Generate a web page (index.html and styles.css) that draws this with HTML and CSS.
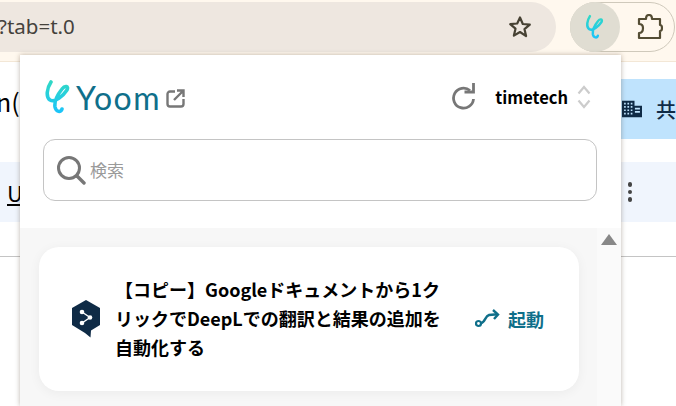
FILE: index.html
```html
<!DOCTYPE html>
<html lang="ja">
<head>
  <meta charset="UTF-8" />
  <meta name="viewport" content="width=device-width, initial-scale=1.0" />
  <title>Yoom</title>
  <link rel="stylesheet" href="styles.css">
</head>
<body>
  <header class="toolbar">
    <div class="urlbar">
      <span class="url-text">?tab=t.0</span>
      <svg class="star" width="24" height="24" viewBox="0 0 24 24"><path d="M12 2.500l2.800 6.500 7 .6-5.300 4.600 1.600 6.900L12 17l-6.100 3.600 1.600-6.900-5.300-4.600 7-.6z" fill="none" stroke="#474234" stroke-width="2.200" stroke-linejoin="round"/></svg>
    </div>
    <div class="ext-pill">
      <div class="ext-active">
        <svg width="20" height="26" viewBox="0 0 26 36"><defs><linearGradient id="yoom-grad" x1="0" y1="0" x2="0" y2="1"><stop offset="0" stop-color="#30d8c6"/><stop offset="1" stop-color="#1cc4f8"/></linearGradient></defs><path d="M6 3C2 9 .5 18 5 21c5 3 13-4 17-10 2-4-2-5-5-1-4 5-8 11-7 18 1 5 6 6 7 2" fill="none" stroke="url(#yoom-grad)" stroke-width="3.400" stroke-linecap="round"/></svg>
      </div>
      <svg class="puzzle" width="26" height="26" viewBox="0 0 26 26"><path d="M2 5h7c0-3 1-4 3-4s3 1 3 4h8v6c1.500 0 2 1.500 2 3s-.5 3-2 3v7H2v-5c3 0 4-2 4-5s-1-4-4-4z" fill="none" stroke="#544d34" stroke-width="2.200" stroke-linejoin="round"/></svg>
    </div>
  </header>

  <main class="page">
    <div class="title-row">
      <span class="doc-title">n(</span>
      <div class="share-btn">
        <svg width="24" height="22" viewBox="0 0 24 22"><path d="M0 1h15v6h9v14H0z" fill="#0f2b46"/><path d="M2.500 3.500h2v2h-2zm4 0h2v2h-2zm4 0h2v2h-2zm-8 4h2v2h-2zm4 0h2v2h-2zm4 0h2v2h-2zm-8 4h2v2h-2zm4 0h2v2h-2zm4 0h2v2h-2zm-8 4h2v2h-2zm4 0h2v2h-2zm4 0h2v2h-2zM15.500 9.500h6v2h-6zm0 4h6v2h-6z" fill="#bfe3fd"/></svg>
        <span class="share-label">共</span>
      </div>
    </div>
    <div class="table-head">
      <span class="head-u">U</span>
      <span class="kebab"><i></i><i></i><i></i></span>
    </div>
    <div class="table-row"></div>
  </main>

  <section class="popup">
    <div class="popup-head">
      <div class="brand">
        <svg width="26" height="36" viewBox="0 0 26 36"><path d="M6 3C2 9 .5 18 5 21c5 3 13-4 17-10 2-4-2-5-5-1-4 5-8 11-7 18 1 5 6 6 7 2" fill="none" stroke="url(#yoom-grad)" stroke-width="3.600" stroke-linecap="round"/></svg>
        <span class="brand-name">Yoom</span>
        <svg class="ext-link" width="19" height="19" viewBox="0 0 19 19"><path d="M9 2.500H4A2.500 2.500 0 0 0 1.500 5v10A2.500 2.500 0 0 0 4 17.500h11a2.500 2.500 0 0 0 2.500-2.500v-5M8 11l8.500-8.500M11 1.500h6.500V8" fill="none" stroke="#777" stroke-width="2.400"/></svg>
      </div>
      <div class="account">
        <svg width="25" height="28" viewBox="0 0 25 28"><path d="M19 7.500A10 10 0 1 0 22.500 16" fill="none" stroke="#777" stroke-width="2.800"/><path d="M13.500 9h9V0" fill="none" stroke="#777" stroke-width="2.800"/></svg>
        <span class="account-name">timetech</span>
        <svg width="14" height="26" viewBox="0 0 14 26"><path d="M1.500 9.500L7 3l5.500 6.500M1.500 16.500L7 23l5.500-6.500" fill="none" stroke="#ccc" stroke-width="2.200"/></svg>
      </div>
    </div>
    <div class="search">
      <svg width="30" height="30" viewBox="0 0 30 30"><circle cx="13" cy="13" r="10.500" fill="none" stroke="#777" stroke-width="3"/><path d="M21 21l7 7" stroke="#777" stroke-width="3.400" stroke-linecap="round"/></svg>
      <span class="search-text">検索</span>
    </div>
    <div class="flow-list">
      <div class="flow-cards">
        <article class="flow-card">
          <svg class="deepl" width="30" height="38" viewBox="0 0 30 38"><path d="M15 0l14 8v17l-9 5.500-.5 7-5.500-4.500L1 25V8z" fill="#0f2b46"/><path d="M11 12l8 5.500-8 5.500" fill="none" stroke="#fff" stroke-width="1.400"/><circle cx="11" cy="12" r="2.300" fill="#fff"/><circle cx="19" cy="17.500" r="2.300" fill="#fff"/><circle cx="11" cy="23" r="2.300" fill="#fff"/></svg>
          <p class="flow-title">【コピー】Googleドキュメントから1クリックでDeepLでの翻訳と結果の追加を自動化する</p>
          <div class="run">
            <svg width="25" height="20" viewBox="0 0 25 20"><circle cx="3.500" cy="14.500" r="2.500" fill="none" stroke="#0f6f8a" stroke-width="2.200"/><path d="M6 14c4 0 4-7 8-8 3-.7 5-.5 8-.5" fill="none" stroke="#0f6f8a" stroke-width="2.400"/><path d="M18 1l5 4.500-4 4.500" fill="none" stroke="#0f6f8a" stroke-width="2.400"/></svg>
            <span>起動</span>
          </div>
        </article>
      </div>
      <div class="scrollbar"><span class="scroll-up"></span></div>
    </div>
  </section>
</body>
</html>
```

FILE: styles.css
```css
html, body {
  margin: 0;
  padding: 0;
  height: 406px;
  overflow: hidden;
}
body {
  position: relative;
  background: #fff;
  font-family: "Noto Sans CJK JP", "Noto Sans", sans-serif;
  color: #000;
}
.toolbar {
  display: flex;
  align-items: center;
  height: 62px;
  box-sizing: border-box;
  padding: 2px 1px 9px 0;
  background: #fff8ee;
  border-bottom: 1px solid #f3e7d6;
}
.urlbar {
  display: flex;
  align-items: center;
  justify-content: space-between;
  width: 556px;
  height: 50px;
  box-sizing: border-box;
  padding-right: 24px;
  background: #eee7e0;
  border-radius: 0 25px 25px 0;
}
.url-text {
  margin-left: -2px;
  margin-top: -2px;
  font-family: "Noto Sans", sans-serif;
  font-size: 20.500px;
  color: #45423c;
}
.ext-pill {
  display: flex;
  align-items: center;
  margin-left: 14px;
  width: 105px;
  height: 50px;
  box-sizing: border-box;
  border: 1.5px solid #cfc9bb;
  border-radius: 25px;
}
.ext-active {
  display: flex;
  align-items: center;
  justify-content: center;
  width: 50px;
  height: 50px;
  margin-left: -1px;
  border-radius: 50%;
  background: #e0ddd2;
}
.puzzle {
  margin-left: 17px;
}
.page {
  display: flex;
  flex-direction: column;
}
.title-row {
  display: flex;
  justify-content: space-between;
  height: 60px;
  margin-top: 17px;
}
.doc-title {
  margin-left: -4px;
  font-size: 25px;
  line-height: 44px;
}
.share-btn {
  display: flex;
  align-items: center;
  gap: 14px;
  width: 55px;
  box-sizing: border-box;
  padding-left: 1px;
  background: #bfe3fd;
  overflow: hidden;
  flex: none;
}
.share-label {
  font-size: 20px;
  font-weight: 500;
  color: #0f2b46;
  flex: none;
}
.table-head {
  display: flex;
  justify-content: space-between;
  align-items: center;
  height: 60px;
  margin-top: 23px;
  padding: 0 44px 0 7px;
  background: #f0f5fd;
}
.head-u {
  font-size: 22px;
  text-decoration: underline;
}
.kebab {
  display: flex;
  flex-direction: column;
  gap: 3px;
}
.kebab i {
  width: 4.500px;
  height: 4.500px;
  border-radius: 50%;
  background: #444;
}
.table-row {
  height: 34px;
  border-bottom: 1px solid #c4c4c4;
}
.popup {
  position: absolute;
  left: 20px;
  top: 55px;
  width: 601px;
  height: 351px;
  display: flex;
  flex-direction: column;
  background: #fff;
  box-shadow: 0 0 5px rgba(60, 40, 20, 0.35);
}
.popup-head {
  display: flex;
  align-items: center;
  justify-content: space-between;
  height: 84px;
  box-sizing: border-box;
  padding: 0 30px 0 25px;
}
.brand {
  display: flex;
  align-items: center;
}
.brand-name {
  margin-left: 5px;
  margin-top: 2px;
  font-family: Lato, sans-serif;
  font-weight: 400;
  font-size: 32px;
  line-height: 40px;
  letter-spacing: 1.500px;
  color: #0f6f8a;
}
.ext-link {
  margin-left: 5px;
  margin-top: 3px;
}
.account {
  display: flex;
  align-items: center;
}
.account-name {
  margin-left: 19px;
  margin-right: 9px;
  font-weight: 700;
  font-size: 16.500px;
  color: #000;
}
.search {
  display: flex;
  align-items: center;
  height: 62px;
  margin: 0 24px 0 23px;
  padding-left: 12px;
  box-sizing: border-box;
  border: 1px solid #c4c4c4;
  border-radius: 12px;
}
.search-text {
  margin-left: 4px;
  margin-top: -2px;
  font-size: 17px;
  color: #9a9a9a;
}
.flow-list {
  display: flex;
  flex: 1;
  margin-top: 27px;
  background: #f7f7f7;
}
.flow-cards {
  flex: 1;
  padding: 19px 18px 0 19px;
}
.flow-card {
  display: flex;
  align-items: center;
  height: 144px;
  box-sizing: border-box;
  padding-left: 32px;
  background: #fff;
  border-radius: 20px;
  box-shadow: 0 2px 12px rgba(0, 0, 0, 0.05);
}
.deepl {
  flex: none;
}
.flow-title {
  width: 326px;
  margin: -2px 0 0 14px;
  font-weight: 700;
  font-size: 18px;
  line-height: 29px;
  color: #000;
}
.run {
  display: flex;
  align-items: center;
  gap: 8px;
  margin-left: 34px;
  font-weight: 700;
  font-size: 18px;
  color: #0f6f8a;
}
.scrollbar {
  width: 24px;
  background: #fafafa;
  display: flex;
  justify-content: center;
  align-items: flex-start;
}
.scroll-up {
  width: 0;
  height: 0;
  margin-top: 6px;
  border-left: 8px solid transparent;
  border-right: 8px solid transparent;
  border-bottom: 11px solid #888;
}
```
